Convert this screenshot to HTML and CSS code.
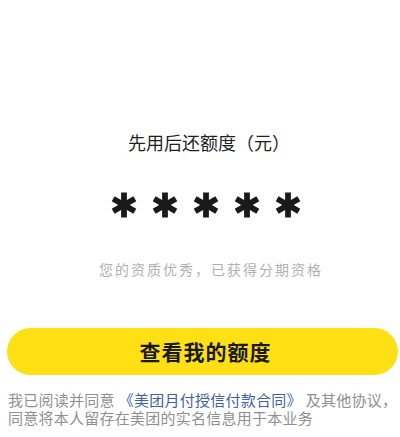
FILE: index.html
```html
<!DOCTYPE html>
<html lang="zh-CN">
<head>
<meta charset="utf-8">
<link rel="stylesheet" href="styles.css">
</head>
<body>
<main class="page">
  <section class="quota">
    <h1 class="title">先用后还额度（元）</h1>
    <div class="stars">
      <svg class="star" viewBox="0 0 28 26"><g stroke="#1a1a1a" stroke-width="5.8" stroke-linecap="butt"><line x1="14" y1="0.5" x2="14" y2="25.5"/><line x1="14" y1="0.5" x2="14" y2="25.5" transform="rotate(60 14 13)"/><line x1="14" y1="0.5" x2="14" y2="25.5" transform="rotate(120 14 13)"/></g></svg>
      <svg class="star" viewBox="0 0 28 26"><g stroke="#1a1a1a" stroke-width="5.8" stroke-linecap="butt"><line x1="14" y1="0.5" x2="14" y2="25.5"/><line x1="14" y1="0.5" x2="14" y2="25.5" transform="rotate(60 14 13)"/><line x1="14" y1="0.5" x2="14" y2="25.5" transform="rotate(120 14 13)"/></g></svg>
      <svg class="star" viewBox="0 0 28 26"><g stroke="#1a1a1a" stroke-width="5.8" stroke-linecap="butt"><line x1="14" y1="0.5" x2="14" y2="25.5"/><line x1="14" y1="0.5" x2="14" y2="25.5" transform="rotate(60 14 13)"/><line x1="14" y1="0.5" x2="14" y2="25.5" transform="rotate(120 14 13)"/></g></svg>
      <svg class="star" viewBox="0 0 28 26"><g stroke="#1a1a1a" stroke-width="5.8" stroke-linecap="butt"><line x1="14" y1="0.5" x2="14" y2="25.5"/><line x1="14" y1="0.5" x2="14" y2="25.5" transform="rotate(60 14 13)"/><line x1="14" y1="0.5" x2="14" y2="25.5" transform="rotate(120 14 13)"/></g></svg>
      <svg class="star" viewBox="0 0 28 26"><g stroke="#1a1a1a" stroke-width="5.8" stroke-linecap="butt"><line x1="14" y1="0.5" x2="14" y2="25.5"/><line x1="14" y1="0.5" x2="14" y2="25.5" transform="rotate(60 14 13)"/><line x1="14" y1="0.5" x2="14" y2="25.5" transform="rotate(120 14 13)"/></g></svg>
    </div>
    <p class="sub">您的资质优秀，已获得分期资格</p>
  </section>
  <button class="btn">查看我的额度</button>
  <p class="agree">我已阅读并同意<span class="link">《美团月付授信付款合同》</span>及其他协议，同意将本人留存在美团的实名信息用于本业务</p>
</main>
</body>
</html>
```
FILE: styles.css
```css
* { box-sizing: border-box; }
html, body {
  margin: 0;
  padding: 0;
  background: #ffffff;
}
body {
  font-family: "Noto Sans CJK SC", "Noto Sans", sans-serif;
  color: #1f1f1f;
}
.page {
  width: 400px;
  height: 437px;
  overflow: hidden;
  display: flex;
  flex-direction: column;
}
.quota {
  display: flex;
  flex-direction: column;
  align-items: center;
}
.title {
  margin: 130px 0 0;
  padding-left: 18px;
  font-size: 18px;
  line-height: 24px;
  font-weight: 400;
  color: #1f1f1f;
}
.stars {
  margin-top: 38px;
  padding-left: 12px;
  display: flex;
  gap: 13px;
  height: 26px;
}
.star {
  width: 28px;
  height: 26px;
  display: block;
}
.sub {
  margin: 41px 0 0;
  padding-left: 22px;
  font-size: 14px;
  line-height: 20px;
  letter-spacing: 2px;
  color: #b0b0b0;
}
.btn {
  margin: 49px 2px 0 7px;
  height: 47px;
  border: none;
  border-radius: 24px;
  background: #ffe014;
  font-family: inherit;
  font-size: 21px;
  font-weight: 700;
  color: #1a1a1a;
  letter-spacing: 1px;
  padding: 0 0 2px 6px;
}
.agree {
  margin: 16px -4px 0 8px;
  font-size: 15px;
  line-height: 18px;
  letter-spacing: 0.25px;
  color: #8f8f8f;
}
.link {
  color: #3f5fa6;
  padding: 0 4px;
}
```
